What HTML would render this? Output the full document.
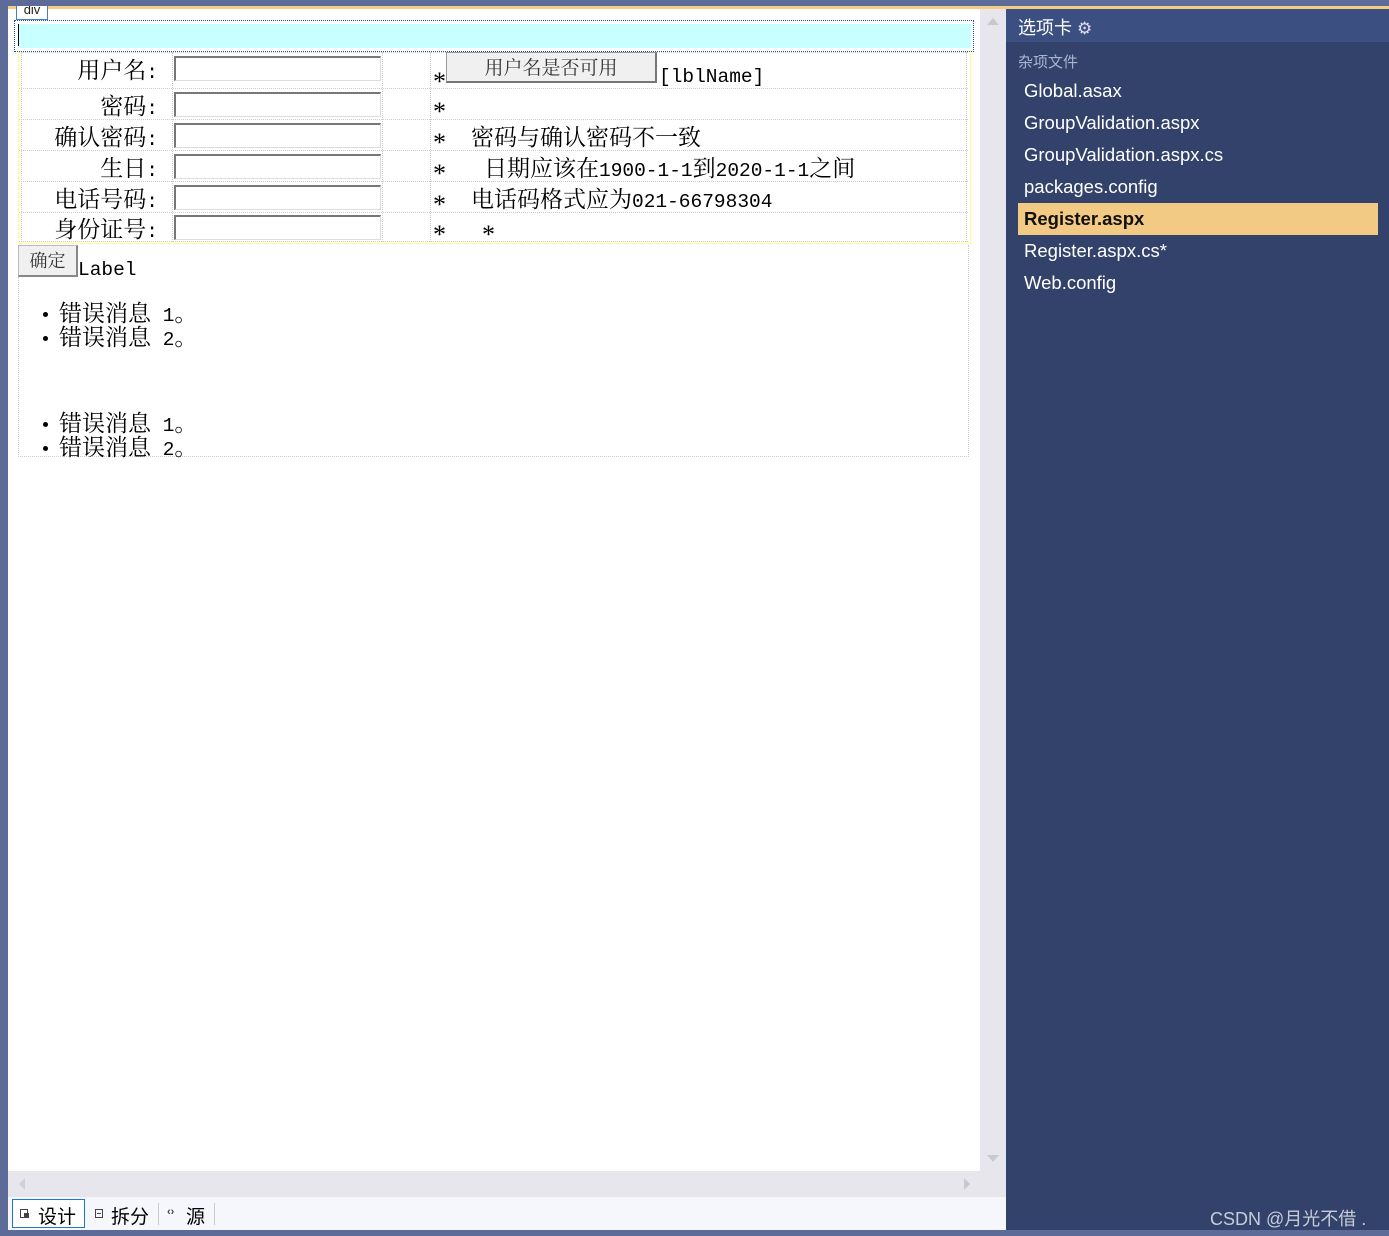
<!DOCTYPE html>
<html><head><meta charset="utf-8"><style>
body{margin:0;width:1389px;height:1236px;background:#5d6b99;position:relative;overflow:hidden;font-family:"Noto Serif CJK SC","Liberation Serif",serif;}
.a{position:absolute}
.s{font-family:"Liberation Sans","Noto Sans CJK SC",sans-serif}
.t{font-size:23px;color:#000;white-space:nowrap;line-height:24px}
.m{font-family:"Liberation Mono",monospace;font-size:19.5px}
.st{font-family:"Liberation Serif",serif;font-size:26px}
.inp{position:absolute;left:174px;width:207px;background:#fff;border-top:2px solid #777;border-left:2px solid #777;border-right:1px solid #ddd;border-bottom:1px solid #ddd;box-sizing:border-box;height:25px}
.hl{position:absolute;left:19px;width:949px;border-top:1px dotted #ccc}
.vl{position:absolute;border-left:1px dotted #ccc}
.f{position:absolute;left:1024px;font-size:18.5px;color:#fff;font-family:"Liberation Sans","Noto Sans CJK SC",sans-serif}
.b{position:absolute;left:43px;width:5px;height:5px;border-radius:50%;background:#000}
</style></head><body>
<div class="a" style="left:8px;top:6px;width:1381px;height:3px;background:#f5cc84"></div>
<div class="a" style="left:8px;top:9px;width:972px;height:1162px;background:#fff"></div>
<div class="a" style="left:980px;top:9px;width:26px;height:1188px;background:#e6e6ec"></div>
<div class="a" style="left:8px;top:1171px;width:972px;height:26px;background:#e6e6ec"></div>
<div class="a" style="left:8px;top:1197px;width:998px;height:33px;background:#f5f7fc"></div>
<div class="a" style="left:1006px;top:9px;width:383px;height:1221px;background:#33426b"></div>
<div class="a" style="left:1006px;top:9px;width:383px;height:33px;background:#3b4f81"></div>
<div class="a" style="left:987px;top:18px;width:0;height:0;border-left:6px solid transparent;border-right:6px solid transparent;border-bottom:7px solid #c8c8d0"></div>
<div class="a" style="left:987px;top:1155px;width:0;height:0;border-left:6px solid transparent;border-right:6px solid transparent;border-top:7px solid #c8c8d0"></div>
<div class="a" style="left:19px;top:1178px;width:0;height:0;border-top:6px solid transparent;border-bottom:6px solid transparent;border-right:6px solid #d0d0d8"></div>
<div class="a" style="left:964px;top:1178px;width:0;height:0;border-top:6px solid transparent;border-bottom:6px solid transparent;border-left:6px solid #c8c8d0"></div>
<div class="a s" style="left:16px;top:6px;width:30px;height:13px;border:1px solid #4a7cc8;border-top:none;font-size:13px;line-height:8px;text-align:center;color:#222;background:#fff;overflow:hidden">div</div>
<div class="a" style="left:14px;top:20px;width:958px;height:30px;border:1px dotted #2050b0;background:#fff"></div>
<div class="a" style="left:18px;top:24px;width:953px;height:24px;background:#c8ffff"></div>
<div class="a" style="left:18px;top:24px;width:1px;height:22px;background:#000"></div>
<div class="a" style="left:18px;top:50px;width:951px;height:193px;border:1px solid #ffff90;border-top:none"></div>
<div class="hl" style="top:52px"></div><div class="hl" style="top:88px"></div><div class="hl" style="top:119px"></div><div class="hl" style="top:150px"></div><div class="hl" style="top:181px"></div><div class="hl" style="top:212px"></div><div class="hl" style="top:241px"></div>
<div class="vl" style="left:21px;top:52px;height:190px"></div>
<div class="vl" style="left:172px;top:52px;height:190px"></div>
<div class="vl" style="left:382px;top:52px;height:190px"></div>
<div class="vl" style="left:430px;top:52px;height:190px"></div>
<div class="vl" style="left:966px;top:52px;height:190px"></div>
<div class="a t" style="left:20px;width:138px;text-align:right;top:57px">用户名<span class="m">:</span></div>
<div class="a t" style="left:20px;width:138px;text-align:right;top:93px">密码<span class="m">:</span></div>
<div class="a t" style="left:20px;width:138px;text-align:right;top:124px">确认密码<span class="m">:</span></div>
<div class="a t" style="left:20px;width:138px;text-align:right;top:155px">生日<span class="m">:</span></div>
<div class="a t" style="left:20px;width:138px;text-align:right;top:186px">电话号码<span class="m">:</span></div>
<div class="a t" style="left:20px;width:138px;text-align:right;top:216px">身份证号<span class="m">:</span></div>
<div class="inp" style="top:56px"></div><div class="inp" style="top:92px"></div><div class="inp" style="top:123px"></div><div class="inp" style="top:154px"></div><div class="inp" style="top:185px"></div><div class="inp" style="top:215px"></div>
<div class="a t st" style="left:433px;top:70px">*</div>
<div class="a t st" style="left:433px;top:100px">*</div>
<div class="a t st" style="left:433px;top:131px">*</div>
<div class="a t st" style="left:433px;top:162px">*</div>
<div class="a t st" style="left:433px;top:193px">*</div>
<div class="a t st" style="left:433px;top:223px">*</div>
<div class="a t st" style="left:482px;top:223px">*</div>
<div class="a" style="left:446px;top:52px;width:211px;height:31px;background:#f0f0f0;border:1px solid #999;border-bottom:2px solid #777;border-right:2px solid #777;box-sizing:border-box;text-align:center;font-size:19px;line-height:28px;color:#333">用户名是否可用</div>
<div class="a t m" style="left:659px;top:65px;font-size:19.5px">[lblName]</div>
<div class="a t" style="left:471px;top:124px">密码与确认密码不一致</div>
<div class="a t" style="left:484px;top:155px">日期应该在<span class="m">1900-1-1</span>到<span class="m">2020-1-1</span>之间</div>
<div class="a t" style="left:471px;top:186px">电话码格式应为<span class="m">021-66798304</span></div>
<div class="a" style="left:18px;top:245px;width:60px;height:32px;background:#f0f0f0;border:1px solid #bbb;border-bottom:2px solid #888;border-right:2px solid #888;box-sizing:border-box;text-align:center;font-size:18px;line-height:28px;color:#333">确定</div>
<div class="a t m" style="left:78px;top:258px">Label</div>
<div class="vl" style="left:18px;top:277px;height:180px"></div>
<div class="vl" style="left:968px;top:245px;height:212px"></div>
<div class="a" style="left:18px;top:456px;width:951px;border-top:1px dotted #ccc"></div>
<div class="b" style="top:312px"></div><div class="a t" style="left:59px;top:300px">错误消息<span class="m"> 1</span>。</div>
<div class="b" style="top:336px"></div><div class="a t" style="left:59px;top:324px">错误消息<span class="m"> 2</span>。</div>
<div class="b" style="top:422px"></div><div class="a t" style="left:59px;top:410px">错误消息<span class="m"> 1</span>。</div>
<div class="b" style="top:446px"></div><div class="a t" style="left:59px;top:434px">错误消息<span class="m"> 2</span>。</div>
<div class="a" style="left:12px;top:1199px;width:73px;height:29px;border:1px solid #1e78d2;box-sizing:border-box;background:#fff"></div>
<div class="a" style="left:20px;top:1209px;width:8px;height:9px;border:1px solid #444;box-sizing:border-box"></div>
<div class="a" style="left:24px;top:1213px;width:5px;height:5px;background:#444"></div>
<div class="a s" style="left:38px;top:1202px;font-size:19px;color:#000">设计</div>
<div class="a" style="left:95px;top:1209px;width:8px;height:9px;border:1px solid #444;box-sizing:border-box"></div>
<div class="a" style="left:97px;top:1213px;width:4px;height:1px;background:#444"></div>
<div class="a s" style="left:111px;top:1202px;font-size:19px;color:#000">拆分</div>
<div class="a" style="left:158px;top:1203px;width:1px;height:22px;background:#ccc"></div>
<div class="a s" style="left:167px;top:1206px;font-size:11px;color:#444;font-weight:bold">‹›</div>
<div class="a s" style="left:186px;top:1202px;font-size:19px;color:#000">源</div>
<div class="a" style="left:214px;top:1203px;width:1px;height:22px;background:#ccc"></div>
<div class="a s" style="left:1018px;top:14px;font-size:18px;color:#fff">选项卡 <span style="font-size:17px;color:#dde">⚙</span></div>
<div class="a s" style="left:1018px;top:51px;font-size:15px;color:#aab4d0">杂项文件</div>
<div class="f" style="top:80px">Global.asax</div>
<div class="f" style="top:112px">GroupValidation.aspx</div>
<div class="f" style="top:144px">GroupValidation.aspx.cs</div>
<div class="f" style="top:176px">packages.config</div>
<div class="a" style="left:1018px;top:203px;width:360px;height:32px;background:#f3ca84"></div>
<div class="f" style="top:208px;color:#111;font-weight:bold">Register.aspx</div>
<div class="f" style="top:240px">Register.aspx.cs*</div>
<div class="f" style="top:272px">Web.config</div>
<div class="a s" style="left:1210px;top:1205px;font-size:18px;color:#c8ccd8">CSDN @月光不借 .</div>
</body></html>
